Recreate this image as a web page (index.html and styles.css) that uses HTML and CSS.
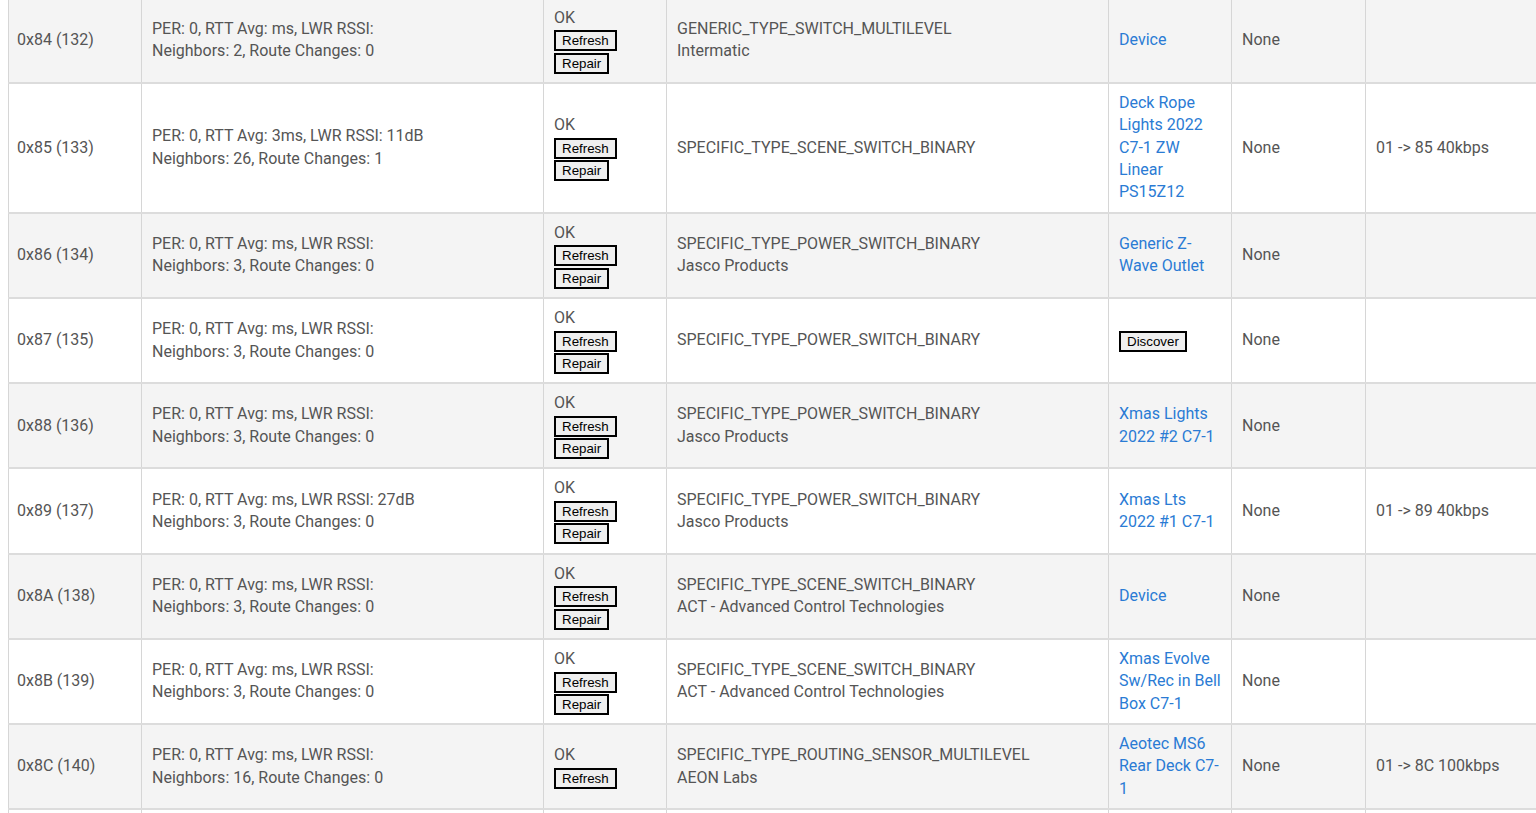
FILE: index.html
```html
<!DOCTYPE html>
<html>
<head>
<meta charset="utf-8">
<link rel="stylesheet" href="styles.css">
</head>
<body>
<div class="scroller">
<table class="nodes">
<colgroup>
<col class="c-id"><col class="c-stats"><col class="c-status"><col class="c-type"><col class="c-dev"><col class="c-sec"><col class="c-route">
</colgroup>
<tbody>
<tr class="odd">
<td class="id">0x84 (132)</td>
<td>PER: 0, RTT Avg: ms, LWR RSSI:<br>Neighbors: 2, Route Changes: 0</td>
<td>OK<br><button class="btn">Refresh</button><br><button class="btn">Repair</button></td>
<td>GENERIC_TYPE_SWITCH_MULTILEVEL<br>Intermatic</td>
<td><a href="#">Device</a></td>
<td>None</td>
<td></td>
</tr>
<tr>
<td class="id">0x85 (133)</td>
<td>PER: 0, RTT Avg: 3ms, LWR RSSI: 11dB<br>Neighbors: 26, Route Changes: 1</td>
<td>OK<br><button class="btn">Refresh</button><br><button class="btn">Repair</button></td>
<td>SPECIFIC_TYPE_SCENE_SWITCH_BINARY</td>
<td><a href="#">Deck Rope Lights 2022 C7-1 ZW Linear PS15Z12</a></td>
<td>None</td>
<td>01 -&gt; 85 40kbps</td>
</tr>
<tr class="odd">
<td class="id">0x86 (134)</td>
<td>PER: 0, RTT Avg: ms, LWR RSSI:<br>Neighbors: 3, Route Changes: 0</td>
<td>OK<br><button class="btn">Refresh</button><br><button class="btn">Repair</button></td>
<td>SPECIFIC_TYPE_POWER_SWITCH_BINARY<br>Jasco Products</td>
<td><a href="#">Generic Z-Wave Outlet</a></td>
<td>None</td>
<td></td>
</tr>
<tr>
<td class="id">0x87 (135)</td>
<td>PER: 0, RTT Avg: ms, LWR RSSI:<br>Neighbors: 3, Route Changes: 0</td>
<td>OK<br><button class="btn">Refresh</button><br><button class="btn">Repair</button></td>
<td>SPECIFIC_TYPE_POWER_SWITCH_BINARY</td>
<td><button class="btn">Discover</button></td>
<td>None</td>
<td></td>
</tr>
<tr class="odd">
<td class="id">0x88 (136)</td>
<td>PER: 0, RTT Avg: ms, LWR RSSI:<br>Neighbors: 3, Route Changes: 0</td>
<td>OK<br><button class="btn">Refresh</button><br><button class="btn">Repair</button></td>
<td>SPECIFIC_TYPE_POWER_SWITCH_BINARY<br>Jasco Products</td>
<td><a href="#">Xmas Lights 2022 #2 C7-1</a></td>
<td>None</td>
<td></td>
</tr>
<tr>
<td class="id">0x89 (137)</td>
<td>PER: 0, RTT Avg: ms, LWR RSSI: 27dB<br>Neighbors: 3, Route Changes: 0</td>
<td>OK<br><button class="btn">Refresh</button><br><button class="btn">Repair</button></td>
<td>SPECIFIC_TYPE_POWER_SWITCH_BINARY<br>Jasco Products</td>
<td><a href="#">Xmas Lts 2022 #1 C7-1</a></td>
<td>None</td>
<td>01 -&gt; 89 40kbps</td>
</tr>
<tr class="odd">
<td class="id">0x8A (138)</td>
<td>PER: 0, RTT Avg: ms, LWR RSSI:<br>Neighbors: 3, Route Changes: 0</td>
<td>OK<br><button class="btn">Refresh</button><br><button class="btn">Repair</button></td>
<td>SPECIFIC_TYPE_SCENE_SWITCH_BINARY<br>ACT - Advanced Control Technologies</td>
<td><a href="#">Device</a></td>
<td>None</td>
<td></td>
</tr>
<tr>
<td class="id">0x8B (139)</td>
<td>PER: 0, RTT Avg: ms, LWR RSSI:<br>Neighbors: 3, Route Changes: 0</td>
<td>OK<br><button class="btn">Refresh</button><br><button class="btn">Repair</button></td>
<td>SPECIFIC_TYPE_SCENE_SWITCH_BINARY<br>ACT - Advanced Control Technologies</td>
<td><a href="#">Xmas Evolve Sw/Rec in Bell Box C7-1</a></td>
<td>None</td>
<td></td>
</tr>
<tr class="odd">
<td class="id">0x8C (140)</td>
<td>PER: 0, RTT Avg: ms, LWR RSSI:<br>Neighbors: 16, Route Changes: 0</td>
<td>OK<br><button class="btn">Refresh</button></td>
<td>SPECIFIC_TYPE_ROUTING_SENSOR_MULTILEVEL<br>AEON Labs</td>
<td><a href="#">Aeotec MS6 Rear Deck C7-1</a></td>
<td>None</td>
<td>01 -&gt; 8C 100kbps</td>
</tr>
<tr class="spacer">
<td>&nbsp;</td><td>&nbsp;</td><td>&nbsp;</td><td>&nbsp;</td><td>&nbsp;</td><td>&nbsp;</td><td>&nbsp;</td>
</tr>
</tbody>
</table>
</div>
</body>
</html>
```

FILE: styles.css
```css
html, body {
  overflow: hidden;
}
body {
  margin: 0 0 0 8px;
  font-family: Roboto, "Liberation Sans", sans-serif;
  font-size: 16px;
  line-height: 22.4px;
  color: #555;
  background: #fff;
}
.scroller {
  margin-top: -3.5px;
}
.nodes {
  border-collapse: collapse;
  table-layout: fixed;
  width: 1557px;
}
.c-id { width: 133px; }
.c-stats { width: 402px; }
.c-status { width: 123px; }
.c-type { width: 442px; }
.c-dev { width: 123px; }
.c-sec { width: 134px; }
.c-route { width: 200px; }

.nodes td {
  border-left: 1px solid #d6d6d6;
  border-right: 1px solid #d6d6d6;
  border-top: 2px solid #dcdcdc;
  border-bottom: 2px solid #dcdcdc;
  padding: 8px 10px;
  vertical-align: middle;
  text-align: left;
}
.nodes td.id {
  padding-left: 8px;
}
.nodes tr.odd td {
  background: #f4f4f4;
}
.nodes a {
  color: #2a7bd4;
  text-decoration: none;
}
.btn {
  font-family: "Liberation Sans", Arial, sans-serif;
  font-size: 13.333px;
  line-height: 15px;
  color: #000;
  background: #efefef;
  border: 2px solid #000;
  border-radius: 0;
  padding: 1px 6px;
  margin: 0;
  vertical-align: middle;
}
```
